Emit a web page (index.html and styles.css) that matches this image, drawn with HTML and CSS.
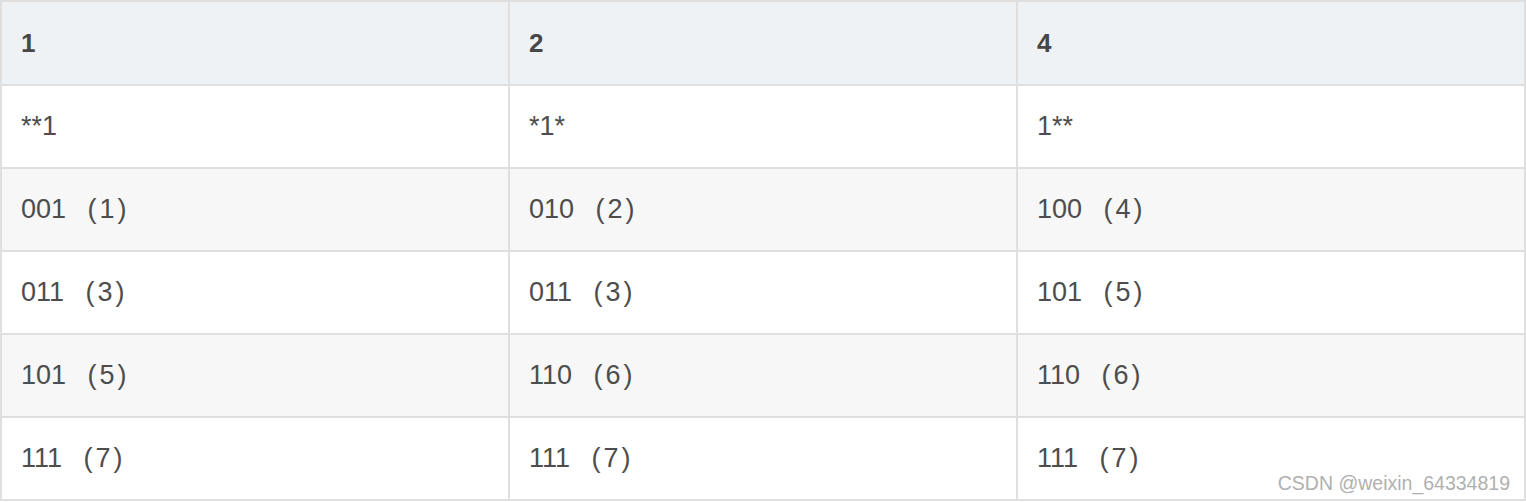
FILE: index.html
```html
<!DOCTYPE html>
<html>
<head>
<meta charset="utf-8">
<link rel="stylesheet" href="styles.css">
</head>
<body>
<div class="wrap">
<table class="grid">
  <colgroup><col class="c1"><col class="c2"><col class="c3"></colgroup>
  <thead>
    <tr><th>1</th><th>2</th><th>4</th></tr>
  </thead>
  <tbody>
    <tr><td>**1</td><td>*1*</td><td>1**</td></tr>
    <tr class="alt"><td>001 <span class="par">(1)</span></td><td>010 <span class="par">(2)</span></td><td>100 <span class="par">(4)</span></td></tr>
    <tr><td>011 <span class="par">(3)</span></td><td>011 <span class="par">(3)</span></td><td>101 <span class="par">(5)</span></td></tr>
    <tr class="alt"><td>101 <span class="par">(5)</span></td><td>110 <span class="par">(6)</span></td><td>110 <span class="par">(6)</span></td></tr>
    <tr><td>111 <span class="par">(7)</span></td><td>111 <span class="par">(7)</span></td><td>111 <span class="par">(7)</span></td></tr>
  </tbody>
</table>
<div class="mark">CSDN @weixin_64334819</div>
</div>
</body>
</html>
```
FILE: styles.css
```css
html, body {
  margin: 0;
  padding: 0;
  background: #ffffff;
}
.wrap {
  position: relative;
  width: 1526px;
  height: 502px;
}
.grid {
  width: 1526px;
  border-collapse: collapse;
  table-layout: fixed;
  font-family: "Liberation Sans", "Noto Sans CJK SC", sans-serif;
  font-size: 27px;
  color: #4d4d4d;
}
.c1, .c2 { width: 508px; }
.grid th, .grid td {
  border: 2px solid #dfdfdf;
  height: 83px;
  padding: 0 0 0 19px;
  text-align: left;
  vertical-align: middle;
  box-sizing: border-box;
  white-space: nowrap;
}
.grid th {
  height: 84px;
  background: #eff2f5;
  font-weight: bold;
  font-size: 26px;
  color: #474747;
}
.grid tr.alt td { background: #f7f7f7; }
.par {
  margin-left: 14px;
  letter-spacing: 3px;
}
.mark {
  position: absolute;
  right: 16px;
  bottom: 7px;
  font-family: "Liberation Sans", sans-serif;
  font-size: 19.5px;
  color: #b0b0b0;
}
```
